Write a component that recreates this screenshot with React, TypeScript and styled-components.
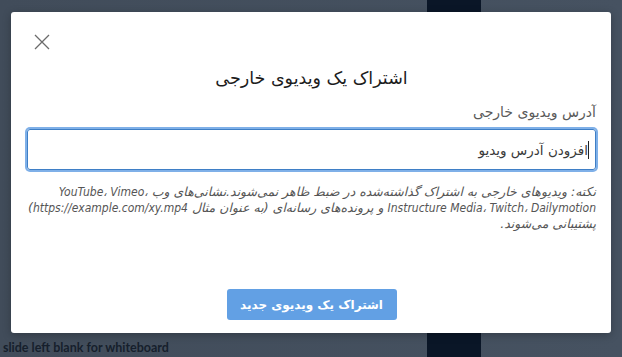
import React from "react";
import styled, { createGlobalStyle } from "styled-components";

const Global = createGlobalStyle`
  html, body { margin: 0; padding: 0; }
  body {
    width: 622px;
    height: 357px;
    overflow: hidden;
    background: #434e5c;
    font-family: "DejaVu Sans", Verdana, sans-serif;
  }
`;

const Page = styled.div`
  position: relative;
  width: 622px;
  height: 357px;
  display: grid;
  grid-template-columns: 427px 54px 1fr;
  background: linear-gradient(90deg, #414c5a 0%, #465261 100%);
`;

const Stage = styled.div`
  display: flex;
  flex-direction: column;
  justify-content: flex-end;
  padding: 0 0 2px 3px;
`;

const SlideNote = styled.div`
  font-family: Lato, "Liberation Sans", sans-serif;
  font-weight: 700;
  font-size: 12.5px;
  line-height: 14px;
  color: #161f2c;
  white-space: nowrap;
`;

const DarkColumn = styled.div`
  background: #0a1627;
`;

const Side = styled.div``;

const Modal = styled.div`
  position: absolute;
  left: 11px;
  top: 12px;
  width: 600px;
  height: 321px;
  box-sizing: border-box;
  background: #ffffff;
  border-radius: 3px;
  box-shadow: 0 2px 8px rgba(0, 0, 0, 0.25);
  display: flex;
  flex-direction: column;
  padding: 22px 15px 13px 16px;
`;

const CloseButton = styled.button`
  align-self: flex-start;
  width: 16px;
  height: 16px;
  margin-left: 7px;
  padding: 0;
  border: 0;
  background: none;
  display: flex;
  color: #6b6b6b;
`;

const Title = styled.h2`
  margin: 16px 0 0;
  direction: rtl;
  text-align: center;
  font-size: 17.5px;
  line-height: 24px;
  font-weight: 400;
  color: #1c1c1c;
`;

const Label = styled.label`
  margin-top: 13px;
  direction: rtl;
  text-align: right;
  font-size: 14px;
  line-height: 18px;
  color: #5a5a5a;
`;

const Input = styled.div`
  margin-top: 8px;
  height: 41px;
  box-sizing: border-box;
  border: 1px solid #3f7fc6;
  border-radius: 3px;
  box-shadow: 0 0 0 2px #7fb0e8;
  direction: rtl;
  display: flex;
  align-items: center;
  padding: 0 6px;
  font-size: 13.5px;
  color: #3a3a3a;
`;

const Caret = styled.span`
  display: inline-block;
  width: 1px;
  height: 18px;
  background: #222;
`;

const Note = styled.p`
  margin: 14px 0 0;
  direction: rtl;
  text-align: right;
  font-size: 12.5px;
  line-height: 16px;
  font-style: italic;
  color: #555;
`;

const Latin = styled.span`
  font-family: "DejaVu Sans Condensed", "DejaVu Sans", sans-serif;
  font-size: 12px;
`;

const Footer = styled.div`
  margin-top: auto;
  display: flex;
  justify-content: center;
`;

const Primary = styled.button`
  width: 170px;
  height: 31px;
  border: 0;
  border-radius: 3px;
  background: #62a0e4;
  color: #fff;
  font-family: "DejaVu Sans", sans-serif;
  font-weight: 700;
  font-size: 12px;
  direction: rtl;
`;

export default function App() {
  return (
    <>
      <Global />
      <Page>
        <Stage>
          <SlideNote>slide left blank for whiteboard</SlideNote>
        </Stage>
        <DarkColumn />
        <Side />
        <Modal>
          <CloseButton aria-label="close">
            <svg width="16" height="16" viewBox="0 0 16 16" fill="none" stroke="currentColor" strokeWidth="1.3">
              <path d="M1 1 L15 15 M15 1 L1 15" />
            </svg>
          </CloseButton>
          <Title>اشتراک یک ویدیوی خارجی</Title>
          <Label>آدرس ویدیوی خارجی</Label>
          <Input>
            <Caret />
            <span>افزودن آدرس ویدیو</span>
          </Input>
          <Note>
            نکته: ویدیوهای خارجی به اشتراک گذاشته‌شده در ضبط ظاهر نمی‌شوند.نشانی‌های وب{" "}
            <Latin>YouTube، Vimeo، Instructure Media، Twitch، Dailymotion</Latin> و پرونده‌های رسانه‌ای (به عنوان مثال{" "}
            <Latin>https://example.com/xy.mp4</Latin>) پشتیبانی می‌شوند.
          </Note>
          <Footer>
            <Primary>اشتراک یک ویدیوی جدید</Primary>
          </Footer>
        </Modal>
      </Page>
    </>
  );
}
